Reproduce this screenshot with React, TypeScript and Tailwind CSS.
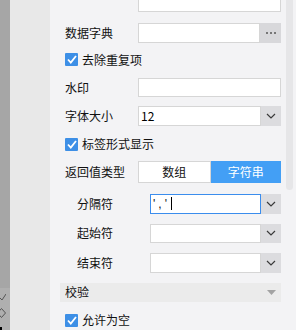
import clsx from 'clsx';
import type { ReactNode } from 'react';

const FONT = { fontFamily: '"Noto Sans CJK SC", "Noto Sans", sans-serif' };

function Chevron() {
  return (
    <svg width="10" height="6" viewBox="0 0 10 6" fill="none">
      <path d="M1 1l4 4 4-4" stroke="#3a3a3a" strokeWidth="1.2" />
    </svg>
  );
}

function Check({ label }: { label: string }) {
  return (
    <div className="flex items-center h-[20px]">
      <div className="w-[13px] h-[13px] bg-[#3d8fe6] rounded-[1px] flex items-center justify-center shrink-0">
        <svg width="10" height="9" viewBox="0 0 10 9" fill="none">
          <path d="M1 4.5l2.8 3L9 1" stroke="#fff" strokeWidth="1.8" />
        </svg>
      </div>
      <span className="ml-[4px] text-[12px] text-[#111]">{label}</span>
    </div>
  );
}

function Row({ label, indent, className, children }: { label: string; indent?: boolean; className?: string; children: ReactNode }) {
  return (
    <div className={clsx('flex items-center h-[20px]', indent && 'pl-[12px]', className)}>
      <span className="w-[73px] shrink-0 text-[12px] text-[#111]">{label}</span>
      <div className="flex-1 flex h-full">{children}</div>
    </div>
  );
}

function Input({ children, focused }: { children?: ReactNode; focused?: boolean }) {
  return (
    <div
      className={clsx(
        'flex-1 h-full bg-white border flex items-center px-[2px] text-[12px]',
        focused ? 'border-[#3b8ded]' : 'border-[#d6d6d6]'
      )}
    >
      {children}
    </div>
  );
}

function Select({ value, focused }: { value?: string; focused?: boolean }) {
  return (
    <>
      <Input focused={focused}>{value}</Input>
      <div className="w-[20px] h-full bg-[#dcdcdf] flex items-center justify-center shrink-0">
        <Chevron />
      </div>
    </>
  );
}

export default function App() {
  return (
    <div className="flex w-[296px] h-[330px] overflow-hidden" style={FONT}>
      <div className="w-[10px] flex flex-col bg-[#a6a6a6]">
        <div className="h-[288px]" />
        <div className="flex-1 bg-[#afafaf] relative">
          <svg className="absolute left-0 top-[5px]" width="6" height="8" viewBox="0 0 6 8" fill="none">
            <path d="M0 5l2 2 4-6" stroke="#555" strokeWidth="1" />
          </svg>
          <svg className="absolute left-[-3px] top-[20px]" width="9" height="10" viewBox="0 0 9 10" fill="none">
            <path d="M4.5 0.5l4 4.5-4 4.5-4-4.5z" stroke="#555" strokeWidth="1" />
          </svg>
          <div className="absolute left-0 bottom-0 w-[2px] h-[3px] bg-black" />
        </div>
      </div>
      <div className="w-[40px] bg-[#e8e8e8]" />
      <div className="flex-1 bg-[#f3f3f5] relative pl-[15px] pr-[15px] flex flex-col">
        <div className="absolute right-[3px] top-0 w-[7px] h-[190px] bg-[#e6e6e8] rounded-b-[4px]" />

        <div className="flex h-[20px] mt-[-7px] pl-[73px]">
          <Input />
        </div>

        <Row label="数据字典" className="mt-[11px]">
          <Input />
          <div className="w-[21px] h-full bg-[#d8d8db] flex items-center justify-center gap-[2px] shrink-0">
            <span className="w-[2px] h-[2px] bg-[#777]" />
            <span className="w-[2px] h-[2px] bg-[#777]" />
            <span className="w-[2px] h-[2px] bg-[#777]" />
          </div>
        </Row>

        <div className="mt-[7px]">
          <Check label="去除重复项" />
        </div>

        <Row label="水印" className="mt-[8px]">
          <Input />
        </Row>

        <Row label="字体大小" className="mt-[9px]">
          <Select value="12" />
        </Row>

        <div className="mt-[8px]">
          <Check label="标签形式显示" />
        </div>

        <Row label="返回值类型" className="mt-[7px] !h-[22px]">
          <div className="flex-1 flex">
            <div className="flex-1 bg-white border border-[#d6d6d6] flex items-center justify-center text-[12px] text-[#111]">数组</div>
            <div className="flex-1 bg-[#439ff5] flex items-center justify-center text-[12px] text-white">字符串</div>
          </div>
        </Row>

        <Row label="分隔符" indent className="mt-[11px]">
          <Input focused>
            <span className="text-[12px] text-[#111] tracking-[3px] font-['Liberation_Sans']">','</span>
            <span className="ml-[1px] w-[1px] h-[13px] bg-black" />
          </Input>
          <div className="w-[20px] h-full bg-[#dcdcdf] flex items-center justify-center shrink-0">
            <Chevron />
          </div>
        </Row>

        <Row label="起始符" indent className="mt-[10px]">
          <Select />
        </Row>

        <Row label="结束符" indent className="mt-[10px]">
          <Select />
        </Row>

        <div className="mt-[10px] ml-[-5px] h-[20px] bg-[#ebebeb] flex items-center pl-[5px] pr-[5px]">
          <span className="flex-1 text-[12px] text-[#111]">校验</span>
          <svg width="9" height="5" viewBox="0 0 9 5">
            <path d="M0 0h9L4.5 5z" fill="#a3a3a3" />
          </svg>
        </div>

        <div className="mt-[8px]">
          <Check label="允许为空" />
        </div>
      </div>
    </div>
  );
}
